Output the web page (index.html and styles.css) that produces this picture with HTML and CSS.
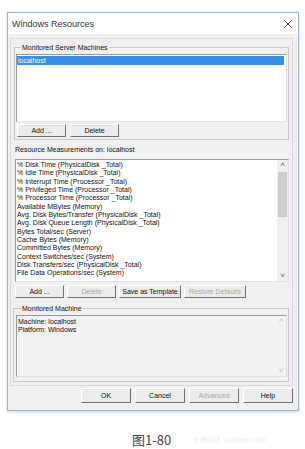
FILE: index.html
```html
<!DOCTYPE html>
<html lang="en">
<head>
    <meta charset="UTF-8">
    <meta name="viewport" content="width=device-width, initial-scale=1.0">
    <title>Windows Resources</title>
    <link rel="stylesheet" href="styles.css">
</head>
<body>
    <div class="window">
        <!-- title bar -->
        <div class="titlebar">
            <span class="title">Windows Resources</span>
            <svg class="close" width="8" height="8" viewBox="0 0 8 8">
                <path d="M0.5 0.5 L7.5 7.5 M7.5 0.5 L0.5 7.5" stroke="#333" stroke-width="0.9" fill="none"/>
            </svg>
        </div>

        <div class="client">
            <div class="panel">
                <!-- server machines -->
                <fieldset class="group servers">
                    <legend>Monitored Server Machines</legend>
                    <div class="listbox server-list">
                        <div class="item selected">localhost</div>
                    </div>
                    <div class="btn-row">
                        <button class="btn">Add ...</button>
                        <button class="btn">Delete</button>
                    </div>
                </fieldset>

                <!-- measurements -->
                <div class="caption-label">Resource Measurements on: localhost</div>
                <div class="listbox measures">
                    <div class="items">
                        <div class="item">% Disk Time (PhysicalDisk _Total)</div>
                        <div class="item">% Idle Time (PhysicalDisk _Total)</div>
                        <div class="item">% Interrupt Time (Processor _Total)</div>
                        <div class="item">% Privileged Time (Processor _Total)</div>
                        <div class="item">% Processor Time (Processor _Total)</div>
                        <div class="item">Available MBytes (Memory)</div>
                        <div class="item">Avg. Disk Bytes/Transfer (PhysicalDisk _Total)</div>
                        <div class="item">Avg. Disk Queue Length (PhysicalDisk _Total)</div>
                        <div class="item">Bytes Total/sec (Server)</div>
                        <div class="item">Cache Bytes (Memory)</div>
                        <div class="item">Committed Bytes (Memory)</div>
                        <div class="item">Context Switches/sec (System)</div>
                        <div class="item">Disk Transfers/sec (PhysicalDisk _Total)</div>
                        <div class="item">File Data Operations/sec (System)</div>
                    </div>
                    <div class="scrollbar">
                        <span class="arrow">&#708;</span>
                        <div class="track"><div class="thumb"></div></div>
                        <span class="arrow">&#709;</span>
                    </div>
                </div>
                <div class="btn-row measure-btns">
                    <button class="btn">Add ...</button>
                    <button class="btn" disabled>Delete</button>
                    <button class="btn">Save as Template</button>
                    <button class="btn" disabled>Restore Defaults</button>
                </div>

                <!-- machine info -->
                <fieldset class="group machine">
                    <legend>Monitored Machine</legend>
                    <div class="infobox">
                        <div class="info-text">
                            <div>Machine: localhost</div>
                            <div>Platform: Windows</div>
                        </div>
                        <div class="info-scroll">
                            <span>&#708;</span>
                            <span>&#709;</span>
                        </div>
                    </div>
                </fieldset>
            </div>

            <!-- dialog buttons -->
            <div class="footer">
                <button class="btn wide">OK</button>
                <button class="btn wide">Cancel</button>
                <button class="btn wide" disabled>Advanced</button>
                <button class="btn wide">Help</button>
            </div>
        </div>
    </div>

    <div class="figure">
        <span class="fig-no">图1-80</span>
        <span class="watermark">云栖社区 yq.aliyun.com</span>
    </div>
</body>
</html>
```

FILE: styles.css
```css
* {
    margin: 0;
    padding: 0;
    box-sizing: border-box;
}

body {
    font-family: 'Liberation Sans', Arial, sans-serif;
    background-color: #fff;
    color: #111;
    font-size: 7px;
}

/* dialog window */
.window {
    margin: 12px 0 0 7px;
    width: 292px;
    border: 1px solid #9fb3c8;
    box-shadow: 0 1px 3px rgba(0, 0, 0, 0.18);
}

.titlebar {
    height: 21px;
    background-color: #fff;
    display: flex;
    align-items: center;
    justify-content: space-between;
    padding: 0 6px 0 4px;
}

.title {
    font-size: 9px;
    color: #333;
}

.client {
    background-color: #f0f0f0;
    padding: 4px 5px 7px 2px;
}

.panel {
    border: 1px solid #d9d9d9;
    padding: 4px 3px 3px 2px;
}

/* group boxes */
.group {
    border: 1px solid #c8c8c8;
    padding: 2px 1px 2px 1px;
}

.group legend {
    margin-left: 5px;
    padding: 0 1px;
    line-height: 9px;
}

.servers {
    margin: 0 0 0 1px;
}

.listbox {
    background-color: #fff;
    border: 1px solid #9a9a9a;
    border-right-color: #e3e3e3;
    border-bottom-color: #e3e3e3;
}

.server-list {
    height: 68px;
    padding: 1px 2px 0 0;
}

.item {
    line-height: 8.35px;
    white-space: nowrap;
    padding-left: 1px;
}

.item.selected {
    background-color: #3a8ee6;
    color: #fff;
    line-height: 9px;
}

/* buttons */
.btn-row {
    display: flex;
    gap: 4px;
    margin-top: 2px;
    padding-left: 1px;
}

.btn {
    font-family: inherit;
    font-size: 7px;
    color: #111;
    height: 13px;
    width: 49px;
    background-color: #ececec;
    border: 1px solid;
    border-color: #fff #707070 #707070 #fff;
}

.btn:disabled {
    color: #a8a8a8;
}

.caption-label {
    margin: 5px 0 0 2px;
    line-height: 9px;
}

/* measurement list */
.measures {
    display: flex;
    height: 123px;
    margin: 5px 0 0 2px;
    overflow: hidden;
}

.items {
    flex: 1;
    padding-top: 1px;
    overflow: hidden;
}

.scrollbar {
    width: 11px;
    background-color: #f0f0f0;
    display: flex;
    flex-direction: column;
    align-items: center;
}

.scrollbar .arrow {
    font-size: 8px;
    line-height: 10px;
    color: #555;
}

.track {
    flex: 1;
    width: 100%;
    padding: 2px 1px;
}

.thumb {
    height: 45px;
    background-color: #cdcdcd;
}

.measure-btns {
    margin-top: 3px;
    padding-left: 2px;
    gap: 3px;
}

.measure-btns .btn:nth-child(3),
.measure-btns .btn:nth-child(4) {
    width: 62px;
}

/* machine info */
.machine {
    margin-top: 6px;
    padding: 2px 1px 4px 2px;
}

.infobox {
    display: flex;
    height: 62px;
    background-color: #f2f2f2;
    border: 1px solid #9a9a9a;
    border-right-color: #dedede;
    border-bottom-color: #dedede;
}

.info-text {
    flex: 1;
    padding: 2px 0 0 1px;
    line-height: 8.4px;
}

.info-scroll {
    width: 10px;
    display: flex;
    flex-direction: column;
    justify-content: space-between;
    align-items: center;
    color: #c4c4c4;
    font-size: 8px;
    line-height: 10px;
}

/* dialog footer */
.footer {
    display: flex;
    justify-content: flex-end;
    gap: 4px;
    padding-top: 2px;
}

.btn.wide {
    width: 50px;
    height: 15px;
}

/* figure caption */
.figure {
    display: flex;
    align-items: center;
    margin-top: 19px;
    padding-left: 132px;
}

.fig-no {
    font-family: 'Noto Sans CJK SC', sans-serif;
    font-size: 13px;
    color: #444;
}

.watermark {
    margin-left: 22px;
    font-size: 7px;
    color: #ececec;
}
```
